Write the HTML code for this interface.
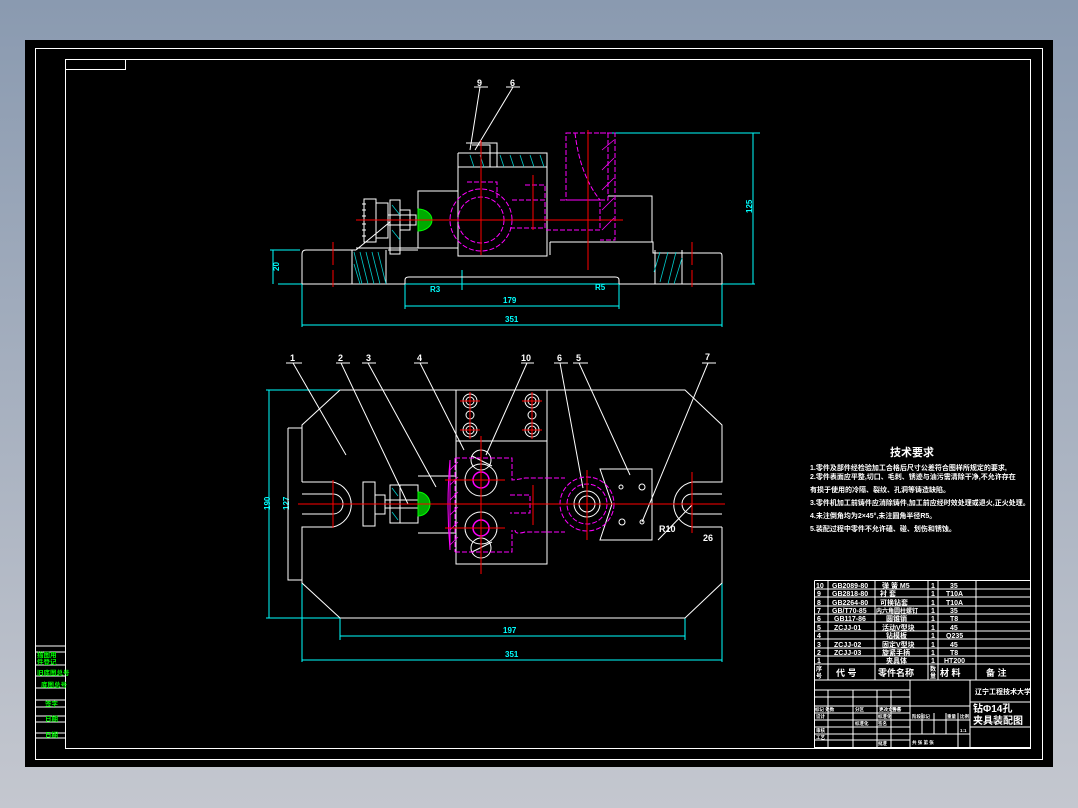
<!DOCTYPE html>
<html><head><meta charset="utf-8"><style>
html,body{margin:0;padding:0;width:1078px;height:808px;overflow:hidden;background:linear-gradient(#8a9ab0,#c4c7cf);}
svg{position:absolute;left:0;top:0}
text{font-family:"Liberation Sans","Noto Sans CJK SC",sans-serif;font-weight:bold}
</style></head><body>
<svg width="1078" height="808" viewBox="0 0 1078 808">
<rect x="25" y="40" width="1028" height="727" fill="#000"/>
<g fill="none" stroke="#fff" stroke-width="1">
<rect x="35.5" y="48.5" width="1007" height="711"/>
<rect x="65.5" y="59.5" width="965" height="689"/>
<rect x="65.5" y="59.5" width="60" height="10"/>
<path d="M35 646H65M35 652H65M35 665H65M35 676H65M35 688H65M35 700H65M35 707H65M35 716H65M35 722H65M35 733H65M35 738H65"/>
</g>
<g fill="#0f0" font-size="6.5">
<text x="37" y="657">描图用</text><text x="37" y="664">件登记</text><text x="37" y="675">旧底图总号</text><text x="41" y="687">底图总号</text><text x="45" y="706">签字</text><text x="45" y="721">日期</text><text x="45" y="737">日期</text>
</g>

<g fill="none" stroke="#0ff" stroke-width="1">
<path d="M278 284H755"/>
<path d="M608 133H760M753 133V284"/>
<path d="M273 250V284M270 250H300"/>
<path d="M405 284V309M619 284V309M405 306H619"/>
<path d="M302 284V327M722 284V327M302 325H722"/>
<path d="M462 270V290"/>
</g>
<g fill="#0ff" font-size="8">
<text x="503" y="303">179</text><text x="505" y="322">351</text>
<text x="270" y="272" transform="rotate(-90 274 267)">20</text>
<text x="741" y="212" transform="rotate(-90 747 207)">125</text>
<text x="430" y="292">R3</text><text x="595" y="290">R5</text>
</g>
<g fill="none" stroke="#fff" stroke-width="1">
<path d="M302 284V254Q302 250 306 250H356M388 250H418M302 284H405M619 284H722"/>
<path d="M405 284V280Q405 277 409 277H615Q619 277 619 280V284"/>
<path d="M386 250V284M352 250V284"/>
<path d="M458 153H547V256H458V153M458 167H547M466 143H497V167M472 145H490V167"/>
<path d="M418 191H458V248H418ZM418 248H356"/>
<path d="M364 199H376V242H364ZM362 204H366M362 210H366M362 216H366M362 224H366M362 230H366M362 236H366"/>
<path d="M376 203H388V238H376"/>
<path d="M390 200H400V254H390ZM400 210H410V230H400"/>
<path d="M388 215H416V225H388"/>
<path d="M550 242H653V253H720Q722 253 722 256V284M550 242V255M608 196H652V242"/>
<path d="M655 250V284M682 250V284"/>
<path d="M480 87L470 150M513 87L475 150M474 87H488M506 87H520M356 250L390 222"/>
</g>
<g stroke="#0cc" stroke-width="0.8" fill="none">
<path d="M354 252L362 284M360 252L368 284M366 252L374 284M372 252L380 284M378 252L386 284M354 264L360 284"/>
<path d="M470 155L474 167M480 155L484 167M500 155L504 167M510 155L514 167M520 155L524 167M530 155L534 167M540 155L544 167"/>
<path d="M660 252L654 272M668 252L660 282M676 252L668 284M682 258L674 284"/>
<path d="M392 205L400 215M392 230L400 240"/>
</g>
<path d="M418 209A14 11 0 0 1 418 231Z" fill="#0a0" stroke="#0f0"/>
<g fill="none" stroke="#f0f" stroke-width="1" stroke-dasharray="5 2">
<circle cx="481" cy="220" r="23"/><circle cx="481" cy="220" r="31"/>
<path d="M467 182H497V198M512 200H545V228H510M525 185H545V200M560 200H600V230H545M566 133H608V200H566ZM575 133Q580 175 600 200"/>
<path d="M600 133H615V240H600"/>
</g>
<g stroke="#f0f" stroke-width="0.8"><path d="M602 150L614 140M602 170L614 158M602 190L614 178M602 210L614 198M602 230L614 218"/></g>
<g stroke="#f00" stroke-width="1" fill="none">
<path d="M356 220H623M481 140V255M333 242V265M333 270V287M692 242V265M692 270V287M588 130V270M533 175V230"/>
</g>

<g fill="none" stroke="#0ff" stroke-width="1">
<path d="M266 390H352M266 618H352M269 390V618"/>
<path d="M340 618V640M685 618V640M340 636H685"/>
<path d="M302 545V662M722 548V662M302 660H722"/>
</g>
<g fill="#0ff" font-size="8">
<text x="503" y="633">197</text><text x="505" y="657">351</text>
<text x="260" y="508" transform="rotate(-90 266 504)">190</text>
<text x="279" y="508" transform="rotate(-90 285 504)">127</text>
</g>
<g fill="none" stroke="#fff" stroke-width="1">
<path d="M340 390H685L722 425V482H696M722 527V583L685 618H340L302 583V527H328M302 482V425L340 390"/>
<path d="M302 482H333A23 23 0 0 1 333 527H302M302 494H333A10 10 0 0 1 333 514H302"/>
<path d="M722 482H692A23 23 0 0 0 692 527H722M722 494H692A10 10 0 0 0 692 514H722"/>
<path d="M288 428H302M288 428V580H302"/>
<path d="M456 390H547V564H456ZM456 441H547" />
<path d="M363 482H375V526H363ZM375 495H385V514H375M390 485H400V523H390ZM400 485H418V523H400M385 500H418V508H385M418 476H456V533H418"/>
<path d="M600 469H652V540H600L612 504Z"/>
<circle cx="481" cy="480" r="16"/><circle cx="481" cy="528" r="16"/>
<circle cx="481" cy="460" r="10"/><circle cx="481" cy="548" r="10"/>
<path d="M472 456L492 466M472 552L492 542"/>
<circle cx="587" cy="504" r="13"/><circle cx="587" cy="504" r="8"/>
<circle cx="470" cy="401" r="7"/><circle cx="470" cy="401" r="4"/><circle cx="470" cy="415" r="4"/><circle cx="470" cy="430" r="7"/><circle cx="470" cy="430" r="4"/>
<circle cx="532" cy="401" r="7"/><circle cx="532" cy="401" r="4"/><circle cx="532" cy="415" r="4"/><circle cx="532" cy="430" r="7"/><circle cx="532" cy="430" r="4"/>
<path d="M293 363L346 455M286 363H302M341 363L408 504M336 363H350M368 363L436 487M362 363H376M420 363L464 450M414 363H428M527 363L486 455M521 363H534M560 363L583 488M554 363H568M579 363L630 475M573 363H588M708 363L642 522M702 363H716M658 540L692 505"/>
<circle cx="621" cy="487" r="2"/><circle cx="642" cy="487" r="3"/><circle cx="622" cy="522" r="3"/><circle cx="642" cy="522" r="2"/>
</g>
<g fill="#fff" font-size="9" font-family="Liberation Sans">
<text x="290" y="361">1</text><text x="338" y="361">2</text><text x="366" y="361">3</text><text x="417" y="361">4</text><text x="521" y="361">10</text><text x="557" y="361">6</text><text x="576" y="361">5</text><text x="705" y="360">7</text>
<text x="659" y="532">R10</text><text x="703" y="541">26</text>
<text x="477" y="86">9</text><text x="510" y="86">6</text>
</g>
<path d="M418 492A12 12 0 0 1 418 516Z" fill="#0a0" stroke="#0f0"/>
<g stroke="#0cc" stroke-width="0.8"><path d="M392 488L398 496M392 512L398 520"/></g>
<g fill="none" stroke="#f0f" stroke-width="1" stroke-dasharray="5 2">
<path d="M455 458H512V480Q515 480 525 478H547M515 530Q515 535 525 532H547M455 552H512V530M455 458V552M547 478H565M547 532H565"/>
<circle cx="587" cy="504" r="27"/><circle cx="587" cy="504" r="20"/>
<path d="M510 495H530V513H510"/>
</g>
<path d="M450 460V550M450 460Q446 505 450 550" fill="none" stroke="#f0f"/>
<g stroke="#f0f" stroke-width="0.8"><path d="M450 470L458 462M450 485L458 477M450 500L458 492M450 515L458 507M450 530L458 522M450 545L458 537"/></g>
<g fill="none" stroke="#f0f" stroke-width="1.5"><circle cx="481" cy="480" r="8"/><circle cx="481" cy="528" r="8"/></g>
<g stroke="#f00" stroke-width="1" fill="none">
<path d="M298 504H725M333 480V528M692 472V533M481 436V574M445 480H505M445 528H505M587 470V540M460 401H480M460 430H480M522 401H542M522 430H542M470 392V439M532 392V439M533 485V525"/>
</g>

<g fill="#fff">
<text x="890" y="456" font-size="11">技术要求</text>
<g font-size="7">
<text x="810" y="470">1.零件及部件经检验加工合格后尺寸公差符合图样所规定的要求,</text>
<text x="810" y="479">2.零件表面应平整,切口、毛刺、锈迹与油污需清除干净,不允许存在</text>
<text x="810" y="492">有损于使用的冷隔、裂纹、孔洞等铸造缺陷。</text>
<text x="810" y="505">3.零件机加工前铸件应消除铸件,加工前应经时效处理或退火,正火处理。</text>
<text x="810" y="518">4.未注倒角均为2×45°,未注圆角半径R5。</text>
<text x="810" y="531">5.装配过程中零件不允许磕、碰、划伤和锈蚀。</text>
</g></g>

<g fill="none" stroke="#fff" stroke-width="1">
<path d="M814.5 580.5H1030.5V747M814.5 580.5V747.5H1030.5"/>
<path d="M814 589H1030M814 597H1030M814 606H1030M814 614H1030M814 622H1030M814 631H1030M814 639H1030M814 648H1030M814 656H1030M814 664H1030M814 680H1030"/>
<path d="M828 580V680M875 580V680M928 580V680M938 580V680M976 580V680"/>
<path d="M910 680V747M970 680V747M970 702H1030M970 727H1030"/>
<path d="M814 690H910M814 697H910M814 706H970M814 713H910M814 720H970M814 727H910M814 734H970M814 740H910"/>
<path d="M828 690V747M853 690V747M877 690V747M891 690V747M922 713V734M934 713V734M946 713V734M958 713V747"/>
</g>
<g fill="#fff" font-size="7">
<text x="816" y="588">10</text><text x="832" y="588">GB2089-80</text><text x="882" y="588">弹 簧 M5</text><text x="931" y="588">1</text><text x="950" y="588">35</text>
<text x="817" y="596">9</text><text x="832" y="596">GB2818-80</text><text x="880" y="596">衬 套</text><text x="931" y="596">1</text><text x="946" y="596">T10A</text>
<text x="817" y="605">8</text><text x="832" y="605">GB2264-80</text><text x="880" y="605">可换钻套</text><text x="931" y="605">1</text><text x="946" y="605">T10A</text>
<text x="817" y="613">7</text><text x="832" y="613">GB/T70-85</text><text x="876" y="613" font-size="6">内六角圆柱螺钉</text><text x="931" y="613">1</text><text x="950" y="613">35</text>
<text x="817" y="621">6</text><text x="834" y="621">GB117-86</text><text x="886" y="621">圆锥销</text><text x="931" y="621">1</text><text x="950" y="621">T8</text>
<text x="817" y="630">5</text><text x="834" y="630">ZCJJ-01</text><text x="882" y="630">活动V型块</text><text x="931" y="630">1</text><text x="950" y="630">45</text>
<text x="817" y="638">4</text><text x="886" y="638">钻模板</text><text x="931" y="638">1</text><text x="946" y="638">Q235</text>
<text x="817" y="647">3</text><text x="834" y="647">ZCJJ-02</text><text x="882" y="647">固定V型块</text><text x="931" y="647">1</text><text x="950" y="647">45</text>
<text x="817" y="655">2</text><text x="834" y="655">ZCJJ-03</text><text x="882" y="655">旋紧手柄</text><text x="931" y="655">1</text><text x="950" y="655">T8</text>
<text x="817" y="663">1</text><text x="886" y="663">夹具体</text><text x="931" y="663">1</text><text x="944" y="663">HT200</text>
<text x="816" y="671" font-size="6">序</text><text x="816" y="678" font-size="6">号</text>
<text x="836" y="676" font-size="9">代 号</text><text x="878" y="676" font-size="9">零件名称</text>
<text x="930" y="671" font-size="6">数</text><text x="930" y="678" font-size="6">量</text>
<text x="940" y="676" font-size="9">材 料</text><text x="986" y="676" font-size="9">备 注</text>
<text x="975" y="694" font-size="7">辽宁工程技术大学</text>
<text x="973" y="712" font-size="10">钻Φ14孔</text>
<text x="973" y="724" font-size="10">夹具装配图</text>
<g font-size="4.5"><text x="815" y="711">标记 处数</text><text x="855" y="711">分区</text><text x="879" y="711">更改文件号</text><text x="892" y="711">签名</text>
<text x="816" y="718">设计</text><text x="816" y="732">审核</text><text x="816" y="739">工艺</text><text x="855" y="725">标准化</text><text x="878" y="718">标准化</text><text x="878" y="725">签名</text><text x="878" y="745">批准</text>
<text x="912" y="718">阶段标记</text><text x="947" y="718">重量</text><text x="960" y="718">比例</text><text x="960" y="732">1:1</text>
<text x="912" y="744">共 张 第 张</text></g>
</g>
</svg>
</body></html>
